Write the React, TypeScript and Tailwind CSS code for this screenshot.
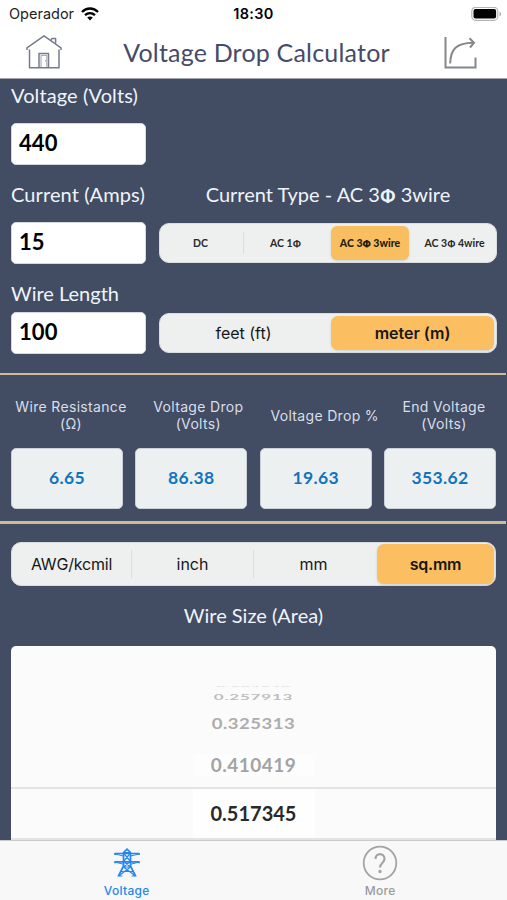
import type { ReactNode } from "react";

const avenir = "font-[Lato,'Noto_Sans',sans-serif]";
const sf = "font-[Inter,'Noto_Sans',sans-serif]";

function Label({ className = "", children }: { className?: string; children: ReactNode }) {
  return (
    <div className={`${avenir} h-6 whitespace-nowrap text-[20px] leading-[22px] text-[#eff4fb] ${className}`}>{children}</div>
  );
}

function Phi() {
  return <span className="font-[Inter,sans-serif] text-[0.88em] leading-none">Φ</span>;
}

function Field({ value }: { value: string }) {
  return (
    <div className={`${avenir} h-[42px] w-[135px] shrink-0 rounded-[5px] border border-[#d5d9df] bg-white pl-[7px] text-[22px] leading-[37px] font-bold tracking-[0.1px] text-black`}>
      {value}
    </div>
  );
}

function Result({ title, value, shift }: { title: ReactNode; value: string; shift: string }) {
  return (
    <div className="flex w-[112px] flex-col items-center">
      <div className={`${sf} ${shift} flex h-[38px] items-center text-center text-[14px] leading-[17px] tracking-[0.33px] whitespace-nowrap text-[#d9dfe8]`}>
        <div>{title}</div>
      </div>
      <div className={`${avenir} mt-[14px] h-[61px] w-full rounded-[5px] border border-[#c9d0d6] bg-[#ecf0f1] text-center text-[17.5px] leading-[57px] font-bold tracking-[0.35px] text-[#1273bd]`}>
        {value}
      </div>
    </div>
  );
}

function HomeIcon() {
  return (
    <svg width="36" height="36" viewBox="0 0 36 36" fill="none" stroke="#777c8d" strokeWidth="1.5" strokeLinejoin="round">
      <path d="M3.5 14.5V32.800H33V14.500" />
      <path d="M1 15V12.800L18 .8 35 12.800V15" />
      <path d="M25 5.200 26 3.400h3.600v5.200" />
      <path d="M13 32.500V18.400h9.500v14.100" />
      <path d="M15 32.500V20.400h5.800v12.100M19.500 25v1.500" strokeWidth=".7" />
    </svg>
  );
}

function ShareIcon() {
  return (
    <svg width="36" height="36" viewBox="0 0 36 36" fill="none" stroke="#85878b" strokeWidth="2">
      <path d="M2.500 2V32.500H32.500V22.500" />
      <path d="M7.200 28.500C7.500 14 13.500 8 30 7.800" />
      <path d="M26.500 3.300 31 7.800 27 12.500" />
    </svg>
  );
}

function PylonIcon() {
  return (
    <svg width="26" height="30" viewBox="0 0 26 30" fill="none" stroke="#2387f2" strokeWidth="1.700">
      <path d="M4.500 28 9.500 18V4.500L13 1.200l3.500 3.300V18L21.500 28" />
      <path d="M1 5.500h24M1 13.800h24M1 5v2M25 5v2M1 13.300v2M25 13.300v2" />
      <path d="m1 6 8.500 2M25 6l-8.500 2M1 14.200l8.500 2M25 14.200l-8.500 2" strokeWidth="1" />
      <path d="m9.500 5 7 8.500L9.500 19M16.500 5l-7 8.500 7 5.500M4.500 28l12-9M21.500 28l-12-9M9.500 4.500h7M9.500 19h7M7 23.500h12M3.500 28h5M17.500 28h5" strokeWidth="1.200" />
    </svg>
  );
}

export default function App() {
  return (
    <div className="flex h-[900px] w-[507px] flex-col overflow-hidden bg-[#424c63]">
      <header className="h-[79px] shrink-0 border-b border-[#a3a6ab] bg-white">
        <div className={`${sf} grid h-7 grid-cols-[1fr_auto_1fr] items-center pr-[5px] pl-[9px] text-[14.5px] leading-7 text-[#222]`}>
          <div className="flex items-center gap-[7px]">
            <span>Operador</span>
            <svg width="18" height="14" viewBox="0 0 18 14" fill="none" stroke="#000" strokeWidth="2.4">
              <path d="M1 5C5.500.4 12.500.4 17 5M4 8.200c3-2.800 7-2.800 10 0" />
              <path d="M9 13.500 6.200 10.500c1.600-1.500 4-1.500 5.600 0z" fill="#000" stroke="none" />
            </svg>
          </div>
          <span className="pr-1 font-semibold tracking-[0.3px] text-black">18:30</span>
          <svg className="justify-self-end" width="31" height="15" viewBox="0 0 31 15">
            <rect x=".8" y=".3" width="26" height="13" rx="3.800" fill="#fff" stroke="#b5b5b5" strokeWidth="1.200" />
            <rect x="2.500" y="2" width="22.600" height="9.600" rx="2" />
            <path d="M28.500 4.700c2 .7 2 3.900 0 4.600z" fill="#aaa" />
          </svg>
        </div>
        <div className="flex h-[50px] items-center justify-between pr-[28px] pl-[26px]">
          <HomeIcon />
          <h1 className={`${avenir} pb-[3px] pl-2 text-[25px] leading-8 tracking-[0.2px] whitespace-nowrap text-[#454b68]`}>Voltage Drop Calculator</h1>
          <ShareIcon />
        </div>
      </header>

      <main className="flex h-[761px] shrink-0 flex-col">
        <section className="flex h-[294px] shrink-0 flex-col pt-[5px] pr-[10px] pl-[11px]">
          <Label className="tracking-[0.1px]">Voltage (Volts)</Label>
          <div className="mt-[15px]"><Field value="440" /></div>
          <div className="mt-[18px] flex">
            <Label className="w-[148px] tracking-[0.1px]">Current (Amps)</Label>
            <Label className="flex-1 text-center">Current Type - AC 3<b><Phi /></b> 3wire</Label>
          </div>
          <div className="mt-[15px] flex h-[42px] items-center justify-between">
            <Field value="15" />
            <div className={`${avenir} flex h-10 w-[338px] items-center rounded-[10px] border border-[#d9dce1] bg-[#eeefef] text-center text-[10.500px] font-bold text-[#292929]`}>
              <span className="w-[83px] pt-[2px] pr-[2px]">DC</span>
              <span className="h-[22px] w-px bg-[#dcdddd]" />
              <span className="w-[87px] pt-[2px] pr-[4px]">AC 1<Phi /></span>
              <span className="h-[34px] w-[78px] rounded-[6px] bg-[#f9be60] leading-[34px] font-black whitespace-nowrap text-[#241c0d] shadow-sm">AC 3<Phi /> 3wire</span>
              <span className="flex-1 pt-[2px] pl-1 whitespace-nowrap">AC 3<Phi /> 4wire</span>
            </div>
          </div>
          <Label className="mt-[18px]">Wire Length</Label>
          <div className="mt-[6px] flex h-[42px] items-center justify-between">
            <Field value="100" />
            <div className={`${sf} flex h-10 w-[338px] items-center rounded-[10px] border border-[#d9dce1] bg-[#eeefef] text-center text-[16px] text-[#171717]`}>
              <span className="w-[171px] pr-1">feet (ft)</span>
              <span className="h-[34px] w-[163px] rounded-[7px] bg-[#fbbe60] leading-[34px] font-semibold shadow-sm">meter (m)</span>
            </div>
          </div>
        </section>

        <section className="mr-[1px] flex h-[151px] shrink-0 justify-between border-t-[2px] border-b-[3px] border-[#d0bc94] pt-[21px] pr-[10px] pl-[11px]">
          <Result shift="translate-x-[4px]" title={<>Wire Resistance<br />(Ω)</>} value="6.65" />
          <Result shift="translate-x-[7px]" title={<>Voltage Drop<br />(Volts)</>} value="86.38" />
          <Result shift="translate-x-[9px]" title="Voltage Drop %" value="19.63" />
          <Result shift="translate-x-[4px]" title={<>End Voltage<br />(Volts)</>} value="353.62" />
        </section>

        <section className="flex flex-1 flex-col px-[11px] pt-[18px]">
          <div className={`${sf} flex h-11 shrink-0 items-center rounded-[10px] border border-[#d9dce1] bg-[#eeefef] text-center text-[16px] text-[#171717]`}>
            <span className="w-[119px] tracking-[-0.2px]">AWG/kcmil</span>
            <span className="h-7 w-px bg-[#dcdddd]" />
            <span className="w-[121px]">inch</span>
            <span className="h-7 w-px bg-[#dcdddd]" />
            <span className="w-[123px] pr-1">mm</span>
            <span className="h-10 w-[117px] rounded-[7px] bg-[#fbbe60] leading-10 font-semibold tracking-[-0.2px] shadow-sm">sq.mm</span>
          </div>
          <Label className="mt-[18px] text-center">Wire Size (Area)</Label>
          <div className="mt-[18px] flex flex-1 flex-col overflow-hidden rounded-t-[5px] bg-[#fbfbfb]">
            <div className={`${avenir} flex h-[141px] shrink-0 flex-col items-center text-center font-bold text-[#a3a3a3]`}>
              <div className="mt-[32px] h-4 w-[110px] scale-y-[0.15] text-[16px] leading-4 tracking-[0.8px] text-[#dedede]">0.204540</div>
              <div className="-mt-[6px] h-[18px] w-[112px] scale-y-[0.48] text-[17px] leading-[18px] tracking-[0.8px] text-[#bdbdbd]">0.257913</div>
              <div className="mt-2 h-5 w-[116px] scale-y-[0.78] text-[18.500px] leading-5 tracking-[0.5px] text-[#adadad]">0.325313</div>
              <div className="mt-[19px] h-6 w-[122px] scale-y-[0.95] bg-[#fdfdfd] text-[19px] leading-6 tracking-[0.5px]">0.410419</div>
            </div>
            <div className="flex h-[53px] justify-center border-y-[2px] border-[#e4e4e4]">
              <div className={`${avenir} w-[122px] bg-[#fefefe] text-center text-[20px] leading-[48px] font-bold text-[#292929]`}>0.517345</div>
            </div>
          </div>
        </section>
      </main>

      <nav className={`${sf} grid h-[60px] shrink-0 grid-cols-2 border-t border-[#cacaca] bg-[#f8f8f8] text-center text-[12px] leading-4 font-medium tracking-[0.3px]`}>
        <div className="flex flex-col items-center pt-[7px] text-[#2387f2]">
          <PylonIcon />
          <span className="mt-[5px]">Voltage</span>
        </div>
        <div className="flex flex-col items-center pt-[4px] text-[#9b9b9b]">
          <svg width="36" height="36" viewBox="0 0 36 36" fill="none" stroke="#a3a3a3" strokeWidth="1.800">
            <circle cx="18" cy="18" r="16.300" />
            <path d="M13.500 14c0-6.500 9-6.500 9 0 0 4-4.500 4-4.500 8.500" strokeWidth="2.200" />
            <circle cx="18" cy="26.500" r=".8" />
          </svg>
          <span className="mt-[2px]">More</span>
        </div>
      </nav>
    </div>
  );
}
